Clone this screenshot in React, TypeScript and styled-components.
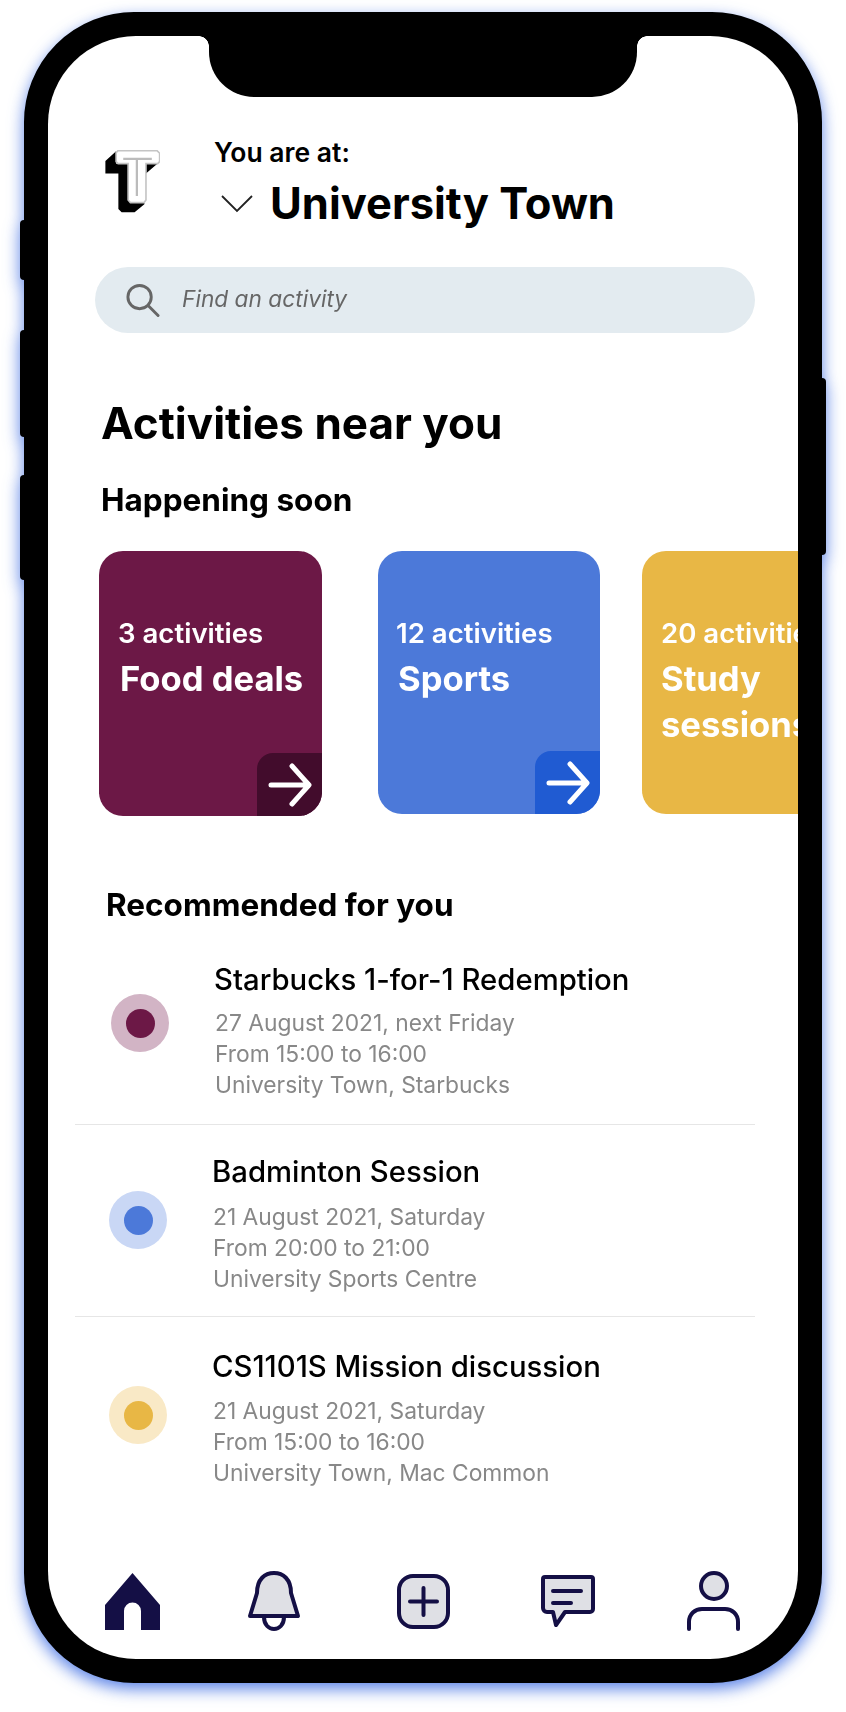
import React from 'react';
import styled, { createGlobalStyle } from 'styled-components';

const GlobalStyle = createGlobalStyle`
  html, body {
    margin: 0;
    padding: 0;
    background: #fff;
  }
  body {
    font-family: Inter, "Liberation Sans", sans-serif;
    color: #000;
  }
`;

const Page = styled.div`
  width: 846px;
  height: 1712px;
  box-sizing: border-box;
  padding: 12px 0 0 24px;
  overflow: hidden;
  background: #fff;
`;

const Phone = styled.div`
  position: relative;
  width: 798px;
  height: 1671px;
  box-sizing: border-box;
  border: 24px solid #000;
  border-radius: 110px;
  background: #000;
  filter: drop-shadow(0 6px 8px rgba(50, 100, 225, 0.8));
`;

const SideKey = styled.div<{ $side: 'left' | 'right'; $top: number; $height: number }>`
  position: absolute;
  top: ${(p) => p.$top}px;
  height: ${(p) => p.$height}px;
  ${(p) => p.$side}: -28px;
  width: 8px;
  background: #000;
  border-radius: 4px;
`;

const Screen = styled.div`
  position: relative;
  width: 750px;
  height: 1623px;
  display: flex;
  flex-direction: column;
  background: #fff;
  border-radius: 88px;
  overflow: hidden;
`;

const Notch = styled.div`
  position: absolute;
  top: 0;
  left: 161px;
  width: 428px;
  height: 61px;
  background: #000;
  border-radius: 0 0 45px 45px;

  &::before,
  &::after {
    content: '';
    position: absolute;
    top: 0;
    width: 10px;
    height: 10px;
  }
  &::before {
    left: -10px;
    background: radial-gradient(circle at 0 100%, transparent 9.5px, #000 10px);
  }
  &::after {
    right: -10px;
    background: radial-gradient(circle at 100% 100%, transparent 9.5px, #000 10px);
  }
`;

const Header = styled.header`
  display: flex;
  align-items: flex-start;
  padding: 101px 0 0 57px;
`;

const Logo = styled.svg`
  width: 55px;
  height: 63px;
  margin: 13px 54px 0 0;
  flex: none;
`;

const HereBlock = styled.div`
  display: flex;
  flex-direction: column;
`;

const HereLabel = styled.div`
  font-size: 26.5px;
  line-height: 30px;
  font-weight: 600;
`;

const PlaceRow = styled.div`
  display: flex;
  align-items: center;
  margin-top: 11px;
`;

const Chevron = styled.svg`
  width: 32px;
  height: 18px;
  margin: 2px 17px 0 7px;
`;

const PlaceName = styled.div`
  font-size: 43.5px;
  line-height: 50px;
  font-weight: 700;
`;

const SearchBar = styled.div`
  display: flex;
  align-items: center;
  height: 66px;
  margin: 39px 43px 0 47px;
  padding-left: 30px;
  background: #e3ebf0;
  border-radius: 33px;
`;

const SearchIcon = styled.svg`
  width: 35px;
  height: 36px;
  margin-right: 22px;
`;

const SearchText = styled.div`
  font-size: 22.7px;
  line-height: 28px;
  margin-top: -2px;
  font-style: italic;
  color: #666;
`;

const MainTitle = styled.h1`
  margin: 65px 0 0 53px;
  font-size: 44px;
  line-height: 50px;
  font-weight: 700;
`;

const SectionTitle = styled.h2<{ $left: number; $top: number }>`
  margin: ${(p) => p.$top}px 0 0 ${(p) => p.$left}px;
  font-size: 31.5px;
  line-height: 40px;
  font-weight: 700;
`;

const CardRail = styled.div`
  display: flex;
  align-items: flex-start;
  margin-top: 31px;
  padding-left: 51px;
  overflow: hidden;
  flex: none;
`;

const Card = styled.div<{ $bg: string; $width: number; $height: number; $gap: number; $pad: number }>`
  position: relative;
  flex: none;
  box-sizing: border-box;
  width: ${(p) => p.$width}px;
  height: ${(p) => p.$height}px;
  margin-right: ${(p) => p.$gap}px;
  padding: 67px 0 0 ${(p) => p.$pad}px;
  background: ${(p) => p.$bg};
  border-radius: 24px;
  color: #fff;
  overflow: hidden;
`;

const CardCount = styled.div`
  font-size: 27.6px;
  line-height: 30px;
  font-weight: 600;
  white-space: nowrap;
`;

const CardName = styled.div<{ $indent: number }>`
  margin: 7px 0 0 ${(p) => p.$indent}px;
  font-size: 34.6px;
  line-height: 46px;
  font-weight: 700;
  white-space: nowrap;
`;

const CardCorner = styled.div<{ $bg: string }>`
  position: absolute;
  right: 0;
  bottom: 0;
  width: 65px;
  height: 63px;
  display: flex;
  align-items: center;
  justify-content: center;
  background: ${(p) => p.$bg};
  border-top-left-radius: 16px;
`;

const Arrow = styled.svg`
  width: 44px;
  height: 44px;
`;

const Activity = styled.div<{ $pad: number; $top: number; $bottom: number; $last?: boolean }>`
  display: flex;
  align-items: flex-start;
  width: 680px;
  box-sizing: border-box;
  margin-left: 27px;
  padding: ${(p) => p.$top}px 0 ${(p) => p.$bottom}px ${(p) => p.$pad}px;
  border-bottom: ${(p) => (p.$last ? 'none' : '1px solid #e6e6e6')};
`;

const Dot = styled.div<{ $ring: string; $core: string; $top: number }>`
  flex: none;
  width: 58px;
  height: 58px;
  margin: ${(p) => p.$top}px 45px 0 0;
  border-radius: 50%;
  background: ${(p) => p.$ring};
  display: flex;
  align-items: center;
  justify-content: center;

  &::after {
    content: '';
    width: 29px;
    height: 29px;
    border-radius: 50%;
    background: ${(p) => p.$core};
  }
`;

const ActivityName = styled.div`
  font-size: 29.3px;
  line-height: 36px;
  font-weight: 500;
`;

const ActivityMeta = styled.div<{ $top: number }>`
  margin: ${(p) => p.$top}px 0 0 1px;
  font-size: 22.8px;
  line-height: 31px;
  color: #888;
`;

const BottomNav = styled.nav`
  display: grid;
  grid-template-columns: repeat(5, 145px);
  justify-items: center;
  align-items: center;
  margin-top: auto;
  padding: 0 0 28px 12px;
`;

const NavIcon = styled.svg<{ $shift?: number }>`
  display: block;
  margin-left: ${(p) => p.$shift ?? 0}px;
`;

const items = [
  {
    name: 'Starbucks 1-for-1 Redemption',
    lines: ['27 August 2021, next Friday', 'From 15:00 to 16:00', 'University Town, Starbucks'],
    ring: '#d2b4c5',
    core: '#6c1846',
    pad: 36,
    top: 37,
    bottom: 24,
    dotTop: 32,
    metaTop: 9,
  },
  {
    name: 'Badminton Session',
    lines: ['21 August 2021, Saturday', 'From 20:00 to 21:00', 'University Sports Centre'],
    ring: '#c9d7f5',
    core: '#4c79d9',
    pad: 34,
    top: 29,
    bottom: 22,
    dotTop: 37,
    metaTop: 11,
  },
  {
    name: 'CS1101S Mission discussion',
    lines: ['21 August 2021, Saturday', 'From 15:00 to 16:00', 'University Town, Mac Common'],
    ring: '#f9e9c6',
    core: '#e8b745',
    pad: 34,
    top: 32,
    bottom: 0,
    dotTop: 37,
    metaTop: 10,
  },
];

const ArrowGlyph = () => (
  <Arrow viewBox="0 0 44 44" fill="none" stroke="#fff" strokeWidth="5" strokeLinecap="round" strokeLinejoin="round">
    <path d="M3 22H40M24 3l17 19-17 19" />
  </Arrow>
);

const App: React.FC = () => (
  <Page>
    <GlobalStyle />
    <Phone>
      <SideKey $side="left" $top={184} $height={60} />
      <SideKey $side="left" $top={294} $height={107} />
      <SideKey $side="left" $top={439} $height={105} />
      <SideKey $side="right" $top={342} $height={177} />
      <Screen>
        <Notch />
        <Header>
          <Logo viewBox="45 58 167 194">
            <path d="M78 62L45 92v38h40v110l10 10h40l30-25 5-95 35-30H78z" fill="#000" />
            <path d="M84 60h120l8 8v26l-6 6h-36v112l-6 8h-42l-7-8V100H84l-6-6V66z" fill="#fff" stroke="#c4c4c4" strokeWidth="5" />
            <path d="M100 85h88M142 85v115" stroke="#bbb" strokeWidth="7" fill="none" />
          </Logo>
          <HereBlock>
            <HereLabel>You are at:</HereLabel>
            <PlaceRow>
              <Chevron viewBox="0 0 32 18" fill="none" stroke="#222" strokeWidth="1.8">
                <path d="M1 1l15 15L31 1" />
              </Chevron>
              <PlaceName>University Town</PlaceName>
            </PlaceRow>
          </HereBlock>
        </Header>

        <SearchBar>
          <SearchIcon viewBox="0 0 36 36" fill="none" stroke="#666" strokeWidth="3" strokeLinecap="round">
            <circle cx="15" cy="15" r="12" />
            <path d="M24 24l10 10" />
          </SearchIcon>
          <SearchText>Find an activity</SearchText>
        </SearchBar>

        <MainTitle>Activities near you</MainTitle>
        <SectionTitle $left={53} $top={32}>Happening soon</SectionTitle>

        <CardRail>
          <Card $bg="#6c1846" $width={223} $height={265} $gap={56} $pad={19}>
            <CardCount>3 activities</CardCount>
            <CardName $indent={2}>Food deals</CardName>
            <CardCorner $bg="#420c2c">
              <ArrowGlyph />
            </CardCorner>
          </Card>
          <Card $bg="#4c79d9" $width={222} $height={263} $gap={42} $pad={18}>
            <CardCount>12 activities</CardCount>
            <CardName $indent={2}>Sports</CardName>
            <CardCorner $bg="#205bd2">
              <ArrowGlyph />
            </CardCorner>
          </Card>
          <Card $bg="#e8b745" $width={222} $height={263} $gap={0} $pad={19}>
            <CardCount>20 activities</CardCount>
            <CardName $indent={0}>
              Study
              <br />
              sessions
            </CardName>
          </Card>
        </CardRail>

        <SectionTitle $left={58} $top={69}>Recommended for you</SectionTitle>

        {items.map((item, i) => (
          <Activity key={item.name} $pad={item.pad} $top={item.top} $bottom={item.bottom} $last={i === items.length - 1}>
            <Dot $ring={item.ring} $core={item.core} $top={item.dotTop} />
            <div>
              <ActivityName>{item.name}</ActivityName>
              <ActivityMeta $top={item.metaTop}>
                {item.lines.map((line) => (
                  <div key={line}>{line}</div>
                ))}
              </ActivityMeta>
            </div>
          </Activity>
        ))}

        <BottomNav>
          <NavIcon width="55" height="57" viewBox="0 0 55 57">
            <path d="M27.5 0L55 32v25H36V38a8.500 8.500 0 0 0-17 0v19H0V32z" fill="#140f45" />
          </NavIcon>
          <NavIcon $shift={-7} width="54" height="60" viewBox="0 0 54 60" fill="#dfe0e5" stroke="#140f45" strokeWidth="4" strokeLinejoin="round">
            <path d="M17 46c0 16 20 16 20 0" fill="none" />
            <path d="M3 45l7-23C10 8 18 2 27 2s17 6 17 20l7 23z" />
          </NavIcon>
          <NavIcon $shift={1} width="53" height="55" viewBox="0 0 53 55" fill="#dfe0e5" stroke="#140f45" strokeWidth="4">
            <rect x="2" y="2" width="49" height="51" rx="14" />
            <path d="M13 27.500H40M26.500 14v27" strokeLinecap="round" />
          </NavIcon>
          <NavIcon width="54" height="52" viewBox="0 0 54 52" fill="#dfe0e5" stroke="#140f45" strokeWidth="4" strokeLinejoin="round">
            <path d="M4 2h46a2 2 0 0 1 2 2v30a3 3 0 0 1-3 3H24l-9 13-3-13H6a4 4 0 0 1-4-4V4a2 2 0 0 1 2-2z" />
            <path d="M12 16h28M12 28h18" fill="none" strokeLinecap="round" />
          </NavIcon>
          <NavIcon $shift={2} width="53" height="60" viewBox="0 0 53 60" fill="none" stroke="#140f45" strokeWidth="4" strokeLinecap="round">
            <circle cx="27" cy="15" r="13" fill="#dfe0e5" />
            <path d="M2 58V51C2 43 8 38 15 38H38C45 38 51 43 51 51V58" />
          </NavIcon>
        </BottomNav>
      </Screen>
    </Phone>
  </Page>
);

export default App;
